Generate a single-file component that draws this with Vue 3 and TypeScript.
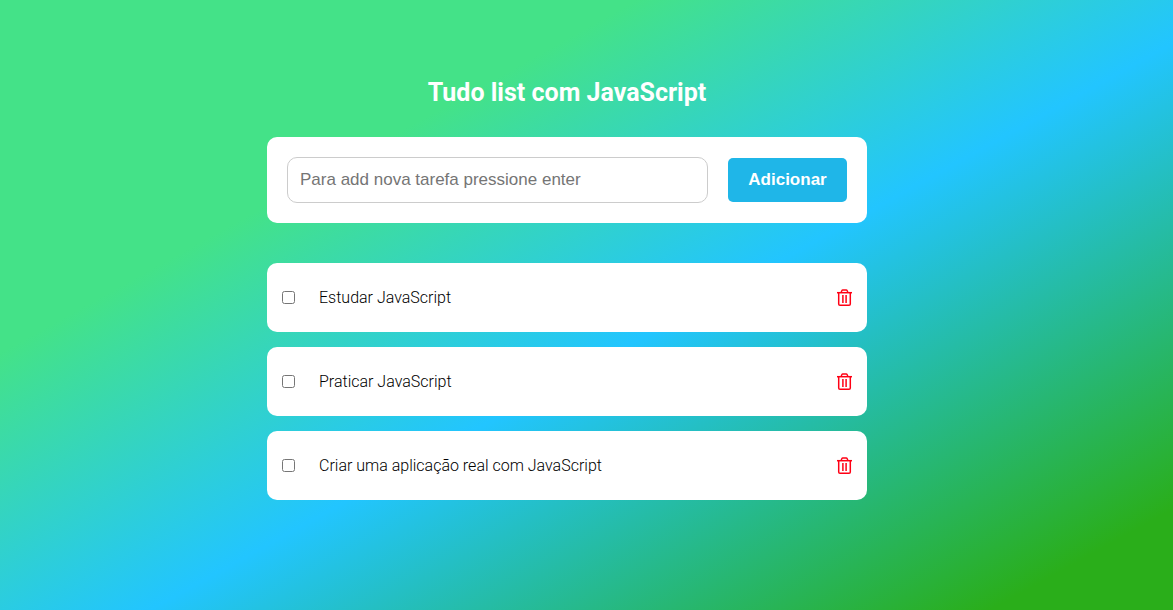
<script setup lang="ts">
import { ref } from 'vue'

interface Task {
  id: number
  name: string
  done: boolean
}

const tasks = ref<Task[]>([
  { id: 1, name: 'Estudar JavaScript', done: false },
  { id: 2, name: 'Praticar JavaScript', done: false },
  { id: 3, name: 'Criar uma aplicação real com JavaScript', done: false },
])
const draft = ref('')
let nextId = 4

function addTask(): void {
  const name = draft.value.trim()
  if (!name) return
  tasks.value.push({ id: nextId++, name, done: false })
  draft.value = ''
}

function removeTask(id: number): void {
  tasks.value = tasks.value.filter((task) => task.id !== id)
}
</script>

<template>
  <main class="page">
    <div class="container">
      <h1 class="title">Tudo list com JavaScript</h1>
      <form class="entry" @submit.prevent="addTask">
        <input
          v-model="draft"
          class="entry-input"
          type="text"
          aria-label="Nova tarefa"
          placeholder="Para add nova tarefa pressione enter"
        />
        <button class="entry-button" type="submit">Adicionar</button>
      </form>
      <ul class="tasks">
        <li v-for="task in tasks" :key="task.id" class="task">
          <input :id="`task-${task.id}`" v-model="task.done" class="task-check" type="checkbox" />
          <label class="task-name" :class="{ done: task.done }" :for="`task-${task.id}`">{{ task.name }}</label>
          <button class="task-remove" type="button" aria-label="Excluir" @click="removeTask(task.id)">
            <svg viewBox="0 0 16 18" width="16" height="18" fill="none" stroke="currentColor" aria-hidden="true">
              <path d="M1 3.7H16" stroke-width="1.5" />
              <path d="M5 3.7L5.8 1.7Q6.1 1 6.8 1H10.2Q10.9 1 11.2 1.7L12 3.7" stroke-width="1.4" />
              <path d="M2.7 3.7V15Q2.7 16.3 4 16.3H13Q14.3 16.3 14.3 15V3.7" stroke-width="1.5" />
              <path d="M6.9 6V14M10.1 6V14" stroke-width="1.5" />
            </svg>
          </button>
        </li>
      </ul>
    </div>
  </main>
</template>

<style>
body {
  margin: 0;
}
</style>

<style scoped>
.page {
  box-sizing: border-box;
  min-height: 100vh;
  padding: 78px 39px 40px 0;
  background: linear-gradient(151deg, #44e288 28%, #22c5ff 55%, #2aae1a 92%);
  font-family: Roboto, sans-serif;
}

.container {
  width: 100%;
  max-width: 600px;
  margin: 0 auto;
}

.title {
  margin: 0 0 29px;
  color: #fff;
  font-size: 25px;
  font-weight: 700;
  line-height: 30px;
  text-align: center;
}

.entry {
  display: flex;
  align-items: center;
  gap: 20px;
  padding: 20px;
  border-radius: 10px;
  background: #fff;
}

.entry-input {
  box-sizing: border-box;
  flex: 1;
  min-width: 0;
  height: 46px;
  padding: 0 12px;
  border: 1px solid #ccc;
  border-radius: 10px;
  font-family: "Liberation Sans", Arial, sans-serif;
  font-size: 17px;
}

.entry-input::placeholder {
  color: #757575;
}

.entry-button {
  min-width: 119px;
  height: 44px;
  padding: 0 20px;
  border: 0;
  border-radius: 5px;
  background: #1fb6e8;
  color: #fff;
  font-family: "Liberation Sans", Arial, sans-serif;
  font-size: 17px;
  font-weight: 700;
  cursor: pointer;
}

.tasks {
  display: flex;
  flex-direction: column;
  gap: 15px;
  margin: 40px 0 0;
  padding: 0;
  list-style: none;
}

.task {
  display: flex;
  align-items: center;
  padding: 15px;
  border-radius: 10px;
  background: #fff;
}

.task-check {
  width: 13px;
  height: 13px;
  margin: 0;
}

.task-name {
  flex: 1;
  padding: 10px 24px;
  color: #000;
  font-size: 16px;
  font-weight: 300;
  line-height: 19px;
}

.task-name.done {
  text-decoration: line-through;
}

.task-remove {
  display: flex;
  padding: 0;
  border: 0;
  background: none;
  color: #ff0014;
  cursor: pointer;
}
</style>
